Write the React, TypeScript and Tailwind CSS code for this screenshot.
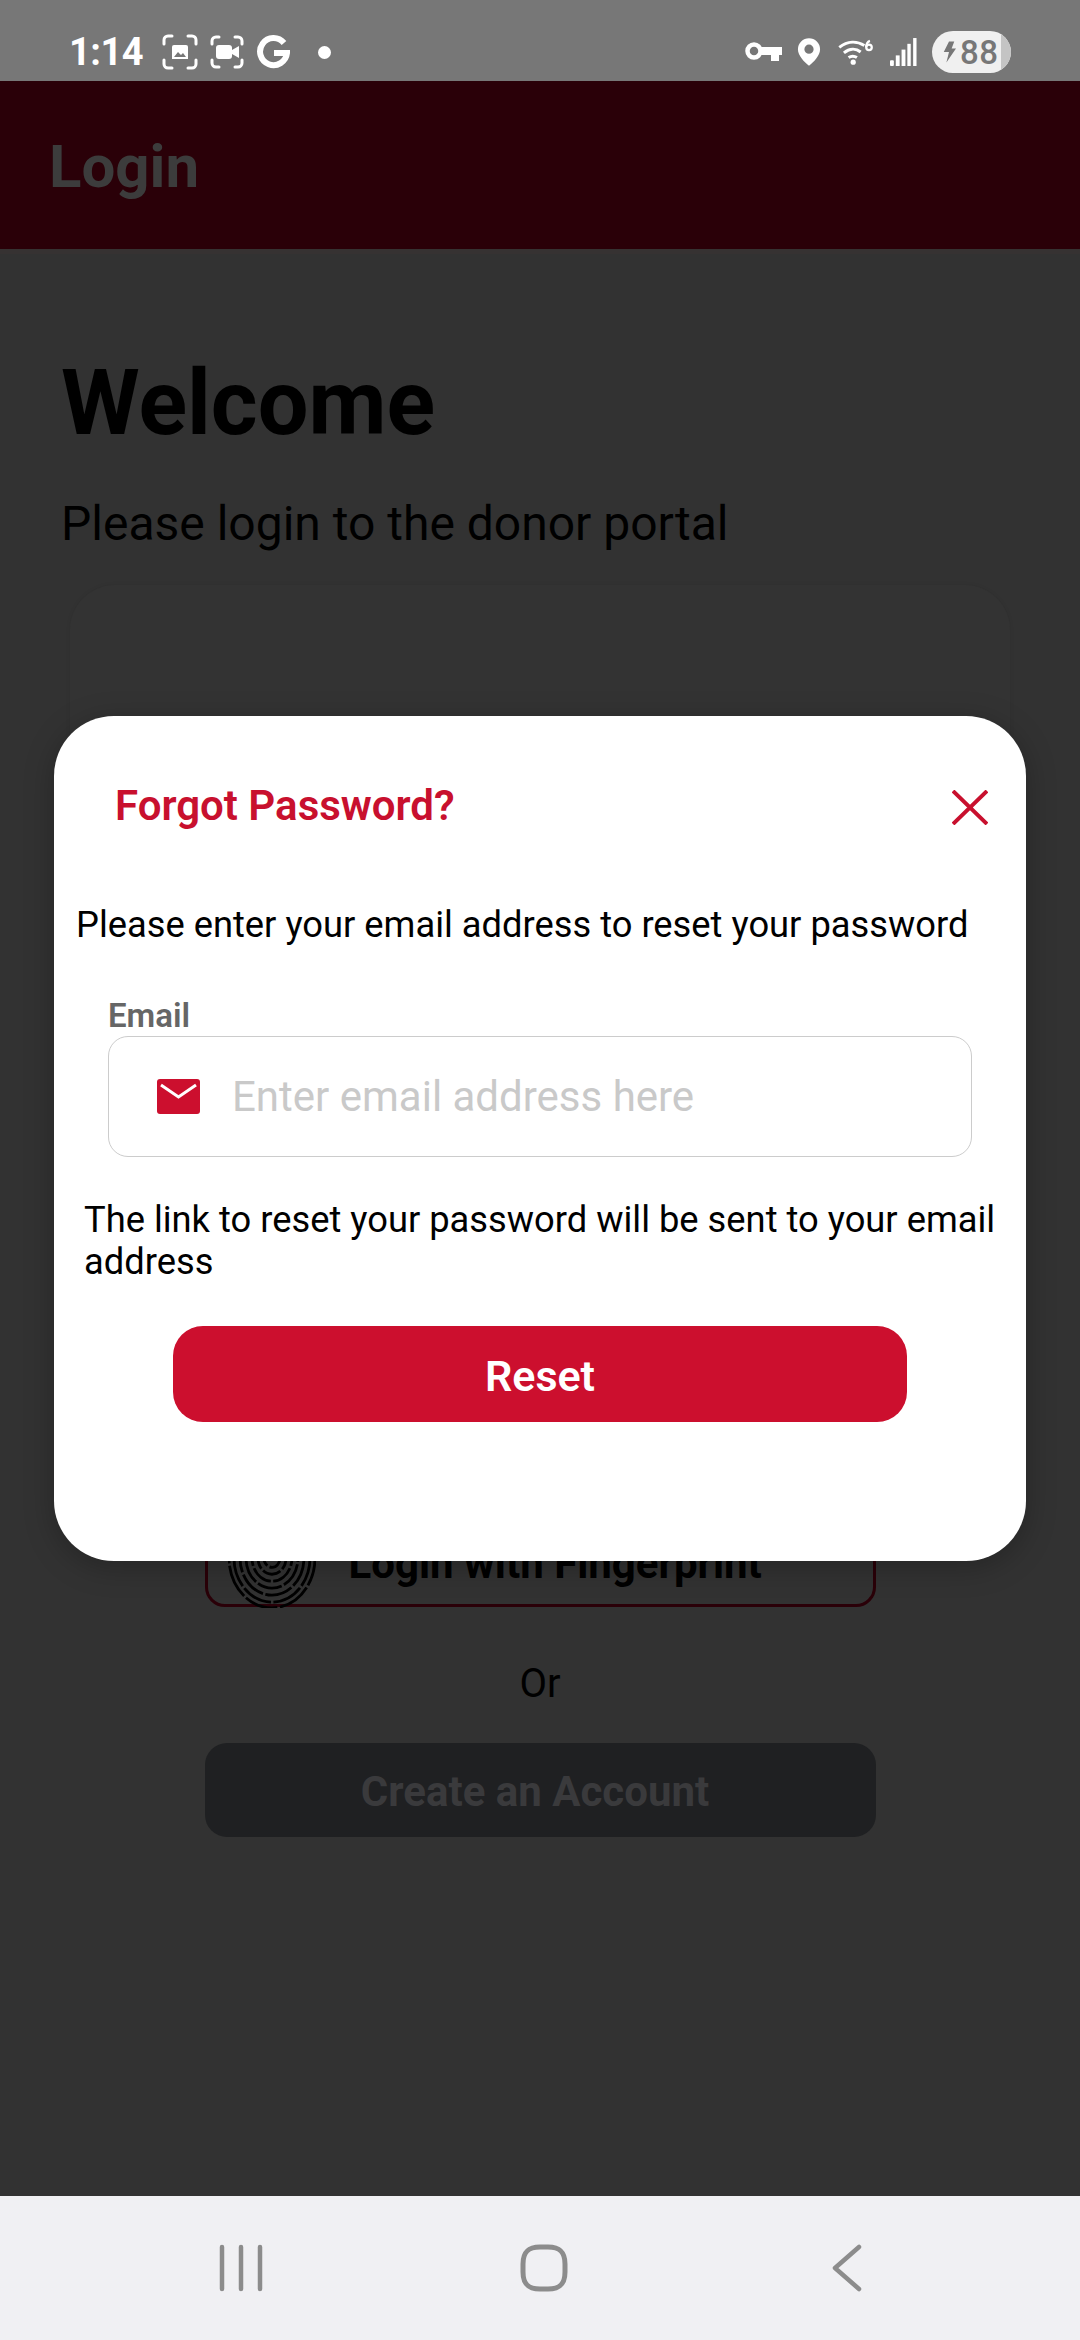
import React from "react";

const roboto = { fontFamily: "Roboto, sans-serif" };

const StatusBar = () => (
  <div className="flex h-[81px] w-full items-start bg-[#777777] pl-[69px] pr-[69px] text-white">
    <div className="flex h-[70px] w-full items-center pt-[34px]">
      <span className="text-[38px] font-bold leading-none tracking-[-0.5px]">1:14</span>
      <svg width="36" height="36" viewBox="0 0 36 36" className="ml-[19px]" fill="none">
        <path d="M2 10V6a4 4 0 0 1 4-4h4M26 2h4a4 4 0 0 1 4 4v4M34 26v4a4 4 0 0 1-4 4h-4M10 34H6a4 4 0 0 1-4-4v-4" stroke="white" strokeWidth="3" strokeLinecap="round" />
        <path d="M10 13a2 2 0 0 1 2-2h12a2 2 0 0 1 2 2v12H10z" fill="white" />
        <path d="M12 23l4-5 3 3 2-2 3 4z" fill="#777777" />
      </svg>
      <svg width="34" height="34" viewBox="0 0 34 34" className="ml-[12px]" fill="none">
        <path d="M2 9V6a4 4 0 0 1 4-4h3M25 2h3a4 4 0 0 1 4 4v3M32 25v3a4 4 0 0 1-4 4h-3M9 32H6a4 4 0 0 1-4-4v-3" stroke="white" strokeWidth="3" strokeLinecap="round" />
        <rect x="6" y="10" width="16" height="14" rx="3" fill="white" />
        <path d="M22 15l7-4v12l-7-4z" fill="white" />
      </svg>
      <svg width="33" height="34" viewBox="0 0 33 34" className="ml-[13px]" fill="none">
        <path d="M27 8A13.5 13.5 0 1 0 30 18H17" stroke="white" strokeWidth="6" />
      </svg>
      <span className="ml-[28px] h-[13px] w-[13px] rounded-full bg-white" />
      <div className="ml-auto flex items-center">
        <svg width="37" height="20" viewBox="0 0 37 20" fill="none">
          <circle cx="9" cy="9" r="6.5" stroke="white" strokeWidth="4.5" />
          <path d="M16 5h21v8h-3v6h-8v-6H16z" fill="white" />
        </svg>
        <svg width="24" height="30" viewBox="0 0 26 32" className="ml-[15px]">
          <path fillRule="evenodd" d="M13 1a12 12 0 0 1 12 12c0 7-7 14-12 18C8 27 1 20 1 13A12 12 0 0 1 13 1zm0 7a5 5 0 1 0 0 10 5 5 0 0 0 0-10z" fill="white" />
        </svg>
        <svg width="36" height="26" viewBox="0 0 38 28" className="ml-[17px]" fill="none">
          <path d="M1 9c9-7 19-7 27-2M6 15c6-5 13-5 18-1M11 20c3-2 6-2 9 0" stroke="white" strokeWidth="3.2" />
          <circle cx="16" cy="25" r="2.8" fill="white" />
          <circle cx="33" cy="9" r="3" stroke="white" strokeWidth="2.4" />
          <path d="M30 9c0-4 1-6 4-7" stroke="white" strokeWidth="2.4" />
        </svg>
        <svg width="27" height="29" viewBox="0 0 28 30" className="ml-[16px]" fill="white">
          <rect x="0" y="23" width="4" height="6" rx="1" />
          <rect x="6" y="18" width="4" height="11" />
          <rect x="12" y="12" width="4" height="17" />
          <rect x="18" y="6" width="3.5" height="23" />
          <rect x="24" y="0" width="3.5" height="29" />
        </svg>
        <div className="ml-[15px] flex h-[42px] w-[79px] items-center overflow-hidden rounded-full bg-[#f0f0f0]">
          <svg width="14" height="24" viewBox="0 0 16 26" className="ml-[10px] shrink-0" fill="#777777">
            <path d="M8 1h6l-3 8h5L5 25l3-12H2z" />
          </svg>
          <span className="ml-[4px] text-[33px] font-medium leading-none tracking-[0.5px] text-[#777777]">88</span>
          <div className="ml-auto h-full w-[10px] shrink-0 bg-[#c4c4c4]" />
        </div>
      </div>
    </div>
  </div>
);

const NavBar = () => (
  <div className="flex h-[144px] w-full shrink-0 items-center justify-center bg-[#f0f0f3]">
    <svg width="44" height="48" viewBox="0 0 44 48" stroke="#8c8c8c" strokeWidth="4.5" strokeLinecap="round">
      <path d="M3 3v42M22 3v42M41 3v42" />
    </svg>
    <svg width="48" height="48" viewBox="0 0 48 48" fill="none" stroke="#8c8c8c" strokeWidth="5" className="ml-[257px]">
      <path d="M3 20C3 8 8 3 20 3h8c12 0 17 5 17 17v8c0 12-5 17-17 17h-8C8 45 3 40 3 28z" />
    </svg>
    <svg width="30" height="48" viewBox="0 0 30 48" fill="none" stroke="#8c8c8c" strokeWidth="4.5" strokeLinecap="round" strokeLinejoin="round" className="ml-[264px]">
      <path d="M27 3L3 24l24 21" />
    </svg>
  </div>
);

// ridges: stretched rings, broken up so they read as a print and not a target
const Fingerprint = () => (
  <svg width="88" height="88" viewBox="0 0 88 88" fill="none" stroke="#000" strokeWidth="2.8" className="shrink-0">
    {[8, 14, 20, 26, 32, 38, 43].map((r, i) => (
      <ellipse key={r} cx="44" cy="38" rx={r} ry={r * 1.16} strokeDasharray={`${16 + i * 3} 2.5`} strokeDashoffset={i * 7} />
    ))}
  </svg>
);

const ForgotModal = () => (
  <div className="absolute left-[54px] top-[716px] h-[845px] w-[972px] rounded-[60px] bg-white shadow-[0_6px_30px_rgba(0,0,0,0.25)]">
    <div className="flex items-center justify-between pl-[61px] pr-[38px] pt-[65px]">
      <h2 className="text-[42px] font-semibold leading-[50px] text-[#c8102e]">Forgot Password?</h2>
      <svg width="36" height="35" viewBox="0 0 36 35" stroke="#c8102e" strokeWidth="4" className="mt-[3px]">
        <path d="M1 1l34 33M35 1L1 34" />
      </svg>
    </div>
    <p className="pl-[22px] pt-[73px] text-[36.3px] leading-[42px] text-black">Please enter your email address to reset your password</p>
    <div className="px-[54px] pt-[51px]">
      <label className="block text-[33px] font-semibold leading-[38px] text-[#666666]">Email</label>
      <div className="mt-[1px] flex h-[121px] items-center rounded-[20px] border-[1.5px] border-[#cccccc] pl-[48px]">
        <svg width="43" height="35" viewBox="0 0 43 35" className="shrink-0">
          <rect width="43" height="35" rx="3" fill="#cc0f2e" />
          <path d="M4 6l17.5 12L39 6" fill="none" stroke="white" strokeWidth="3" />
        </svg>
        <span className="ml-[32px] text-[42px] leading-none text-[#c9c9c9]">Enter email address here</span>
      </div>
    </div>
    <p className="pl-[30px] pr-[30px] pt-[42px] text-[36.3px] leading-[42px] text-black">The link to reset your password will be sent to your email address</p>
    <div className="flex justify-center pt-[43px]">
      <button className="h-[96px] w-[734px] rounded-[30px] bg-[#cc0f2e] pt-[4px] text-[43px] font-semibold text-white">Reset</button>
    </div>
  </div>
);

const App = () => {
  return (
    <div className="relative flex h-[2340px] w-[1080px] flex-col overflow-hidden bg-[#323232]" style={roboto}>
      <StatusBar />
      <div className="flex h-[173px] shrink-0 items-center border-b-[5px] border-[#363232] bg-[#2a0008] pl-[49px] pt-[4px]">
        <h1 className="text-[60px] font-bold leading-none text-[#3c3c3c]">Login</h1>
      </div>
      <div className="flex flex-1 flex-col items-center overflow-hidden">
        <div className="w-full pl-[61px] pt-[102px]">
          <h2 className="text-[90px] font-bold leading-[96px] text-black">Welcome</h2>
          <p className="pt-[44px] text-[48px] leading-[56px] text-black">Please login to the donor portal</p>
        </div>
        <div className="mt-[33px] h-[900px] w-[940px] shrink-0 rounded-[45px] bg-[#333333] shadow-[0_0_4px_rgba(0,0,0,0.08)]" />
        <div className="mt-[35px] flex h-[87px] w-[671px] shrink-0 items-center rounded-[20px] border-[3px] border-[#2a0008] pl-[20px]">
          <Fingerprint />
          <span className="ml-[33px] text-[42px] font-bold leading-none text-black">Login with Fingerprint</span>
        </div>
        <p className="pt-[53px] text-[40px] leading-[47px] text-black">Or</p>
        <button className="mt-[36px] h-[94px] w-[671px] shrink-0 rounded-[22px] bg-[#1f2022] pr-[10px] pt-[3px] text-[42px] font-bold text-[#3a3a3c]">Create an Account</button>
      </div>
      <NavBar />
      <ForgotModal />
    </div>
  );
};

export default App;
